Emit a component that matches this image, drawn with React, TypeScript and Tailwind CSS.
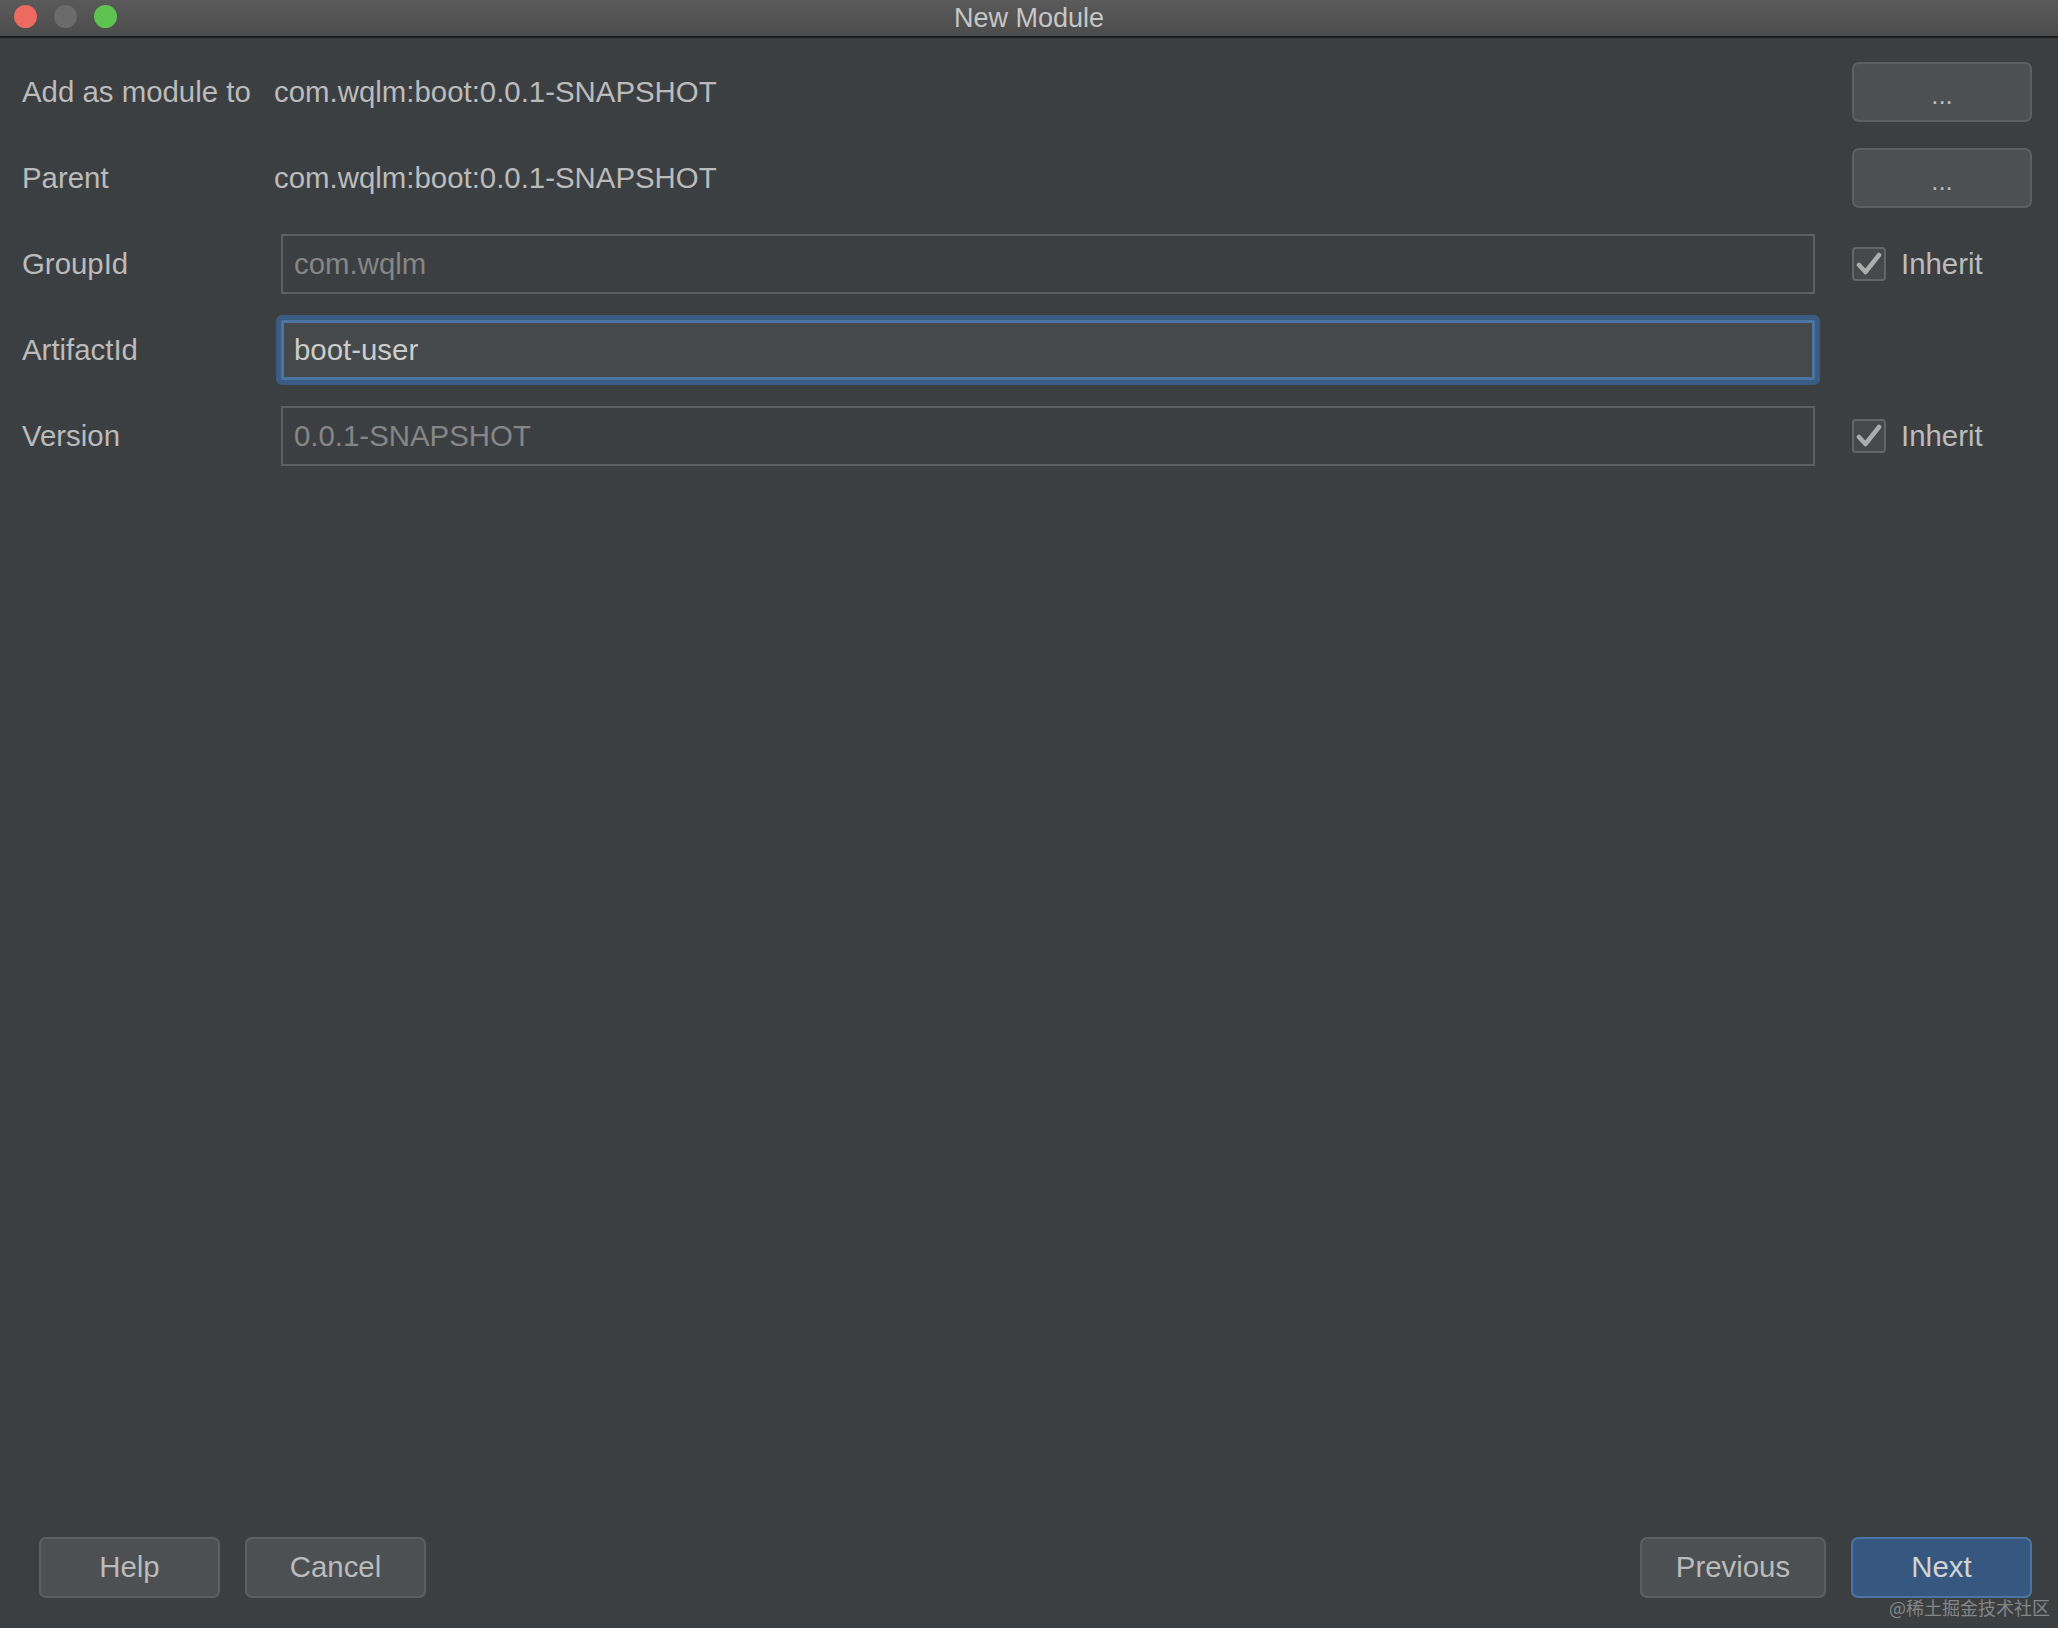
import React from 'react';

const font = { fontFamily: '"Liberation Sans", Arial, sans-serif' };

function TrafficLights() {
  return (
    <div className="absolute left-[14px] top-[5px] flex items-center gap-[17px]">
      <span className="w-[23px] h-[23px] rounded-full bg-[#ec6a5f]" />
      <span className="w-[23px] h-[23px] rounded-full bg-[#6b6b6b]" />
      <span className="w-[23px] h-[23px] rounded-full bg-[#5fc351]" />
    </div>
  );
}

function Checkbox() {
  return (
    <span className="w-[34px] h-[34px] rounded-[4px] border-2 border-[#636566] bg-[#45494a] flex items-center justify-center">
      <svg width="26" height="24" viewBox="0 0 26 24" fill="none">
        <path d="M3 13l6.5 7L23 3" stroke="#acacac" strokeWidth="4.5" strokeLinecap="round" strokeLinejoin="round" />
      </svg>
    </span>
  );
}

function DialogButton({ label, primary, wide }: { label: string; primary?: boolean; wide?: boolean }) {
  return (
    <button
      className={
        (wide ? 'w-[186px] ' : 'w-[181px] ') +
        (primary
          ? 'h-[61px] rounded-[7px] border-2 border-[#4a74a3] bg-[#365880] text-[#d3d3d3] text-[29.4px]'
          : 'h-[61px] rounded-[7px] border-2 border-[#5c6062] bg-[#4c5052] text-[#bbbbbb] text-[29.4px]')
      }
      style={font}
    >
      {label}
    </button>
  );
}

export default function App() {
  return (
    <div className="relative w-[2058px] h-[1628px] bg-[#3c3f41] flex flex-col overflow-hidden" style={font}>
      <header className="relative h-[38px] shrink-0 bg-gradient-to-b from-[#5a5a5a] to-[#4c4c4c] border-b-2 border-[#1c1c1c] flex items-center justify-center">
        <TrafficLights />
        <span className="text-[27px] text-[#c6c6c6] leading-none">New Module</span>
      </header>

      <main className="flex-1 pt-[24px] pl-[22px] pr-[26px] flex flex-col gap-[26px] text-[29.4px] text-[#bbbbbb]">
        <div className="h-[60px] flex items-center">
          <span className="w-[252px]">Add as module to</span>
          <span className="flex-1">com.wqlm:boot:0.0.1-SNAPSHOT</span>
          <button className="ml-[37px] w-[180px] h-[60px] rounded-[7px] border-2 border-[#5c6062] bg-[#4c5052] text-[#bbbbbb] text-[26px] leading-none pt-[6px]">...</button>
        </div>

        <div className="h-[60px] flex items-center">
          <span className="w-[252px]">Parent</span>
          <span className="flex-1">com.wqlm:boot:0.0.1-SNAPSHOT</span>
          <button className="ml-[37px] w-[180px] h-[60px] rounded-[7px] border-2 border-[#5c6062] bg-[#4c5052] text-[#bbbbbb] text-[26px] leading-none pt-[6px]">...</button>
        </div>

        <div className="h-[60px] flex items-center">
          <span className="w-[252px]">GroupId</span>
          <div className="flex-1 ml-[7px] h-[60px] border-2 border-[#5f6061] flex items-center pl-[11px] text-[#868686]">com.wqlm</div>
          <div className="ml-[37px] w-[180px] flex items-center gap-[15px]">
            <Checkbox />
            <span>Inherit</span>
          </div>
        </div>

        <div className="h-[60px] flex items-center">
          <span className="w-[252px]">ArtifactId</span>
          <div className="flex-1 ml-[7px] h-[60px] border-[3px] border-[#4b74a2] bg-[#45494a] shadow-[0_0_0_5px_#3b5c82] rounded-[2px] flex items-center pl-[10px] text-[#cccccc]">boot-user</div>
          <div className="ml-[37px] w-[180px]" />
        </div>

        <div className="h-[60px] flex items-center">
          <span className="w-[252px]">Version</span>
          <div className="flex-1 ml-[7px] h-[60px] border-2 border-[#5f6061] flex items-center pl-[11px] text-[#868686]">0.0.1-SNAPSHOT</div>
          <div className="ml-[37px] w-[180px] flex items-center gap-[15px]">
            <Checkbox />
            <span>Inherit</span>
          </div>
        </div>
      </main>

      <footer className="shrink-0 pl-[39px] pr-[26px] pb-[30px] flex items-center justify-between">
        <div className="flex gap-[25px]">
          <DialogButton label="Help" />
          <DialogButton label="Cancel" />
        </div>
        <div className="flex gap-[25px]">
          <DialogButton label="Previous" wide />
          <DialogButton label="Next" primary />
        </div>
      </footer>

      <span
        className="absolute right-[8px] bottom-[12px] text-[18px] leading-none text-[#9a9a9a]/80"
        style={{ fontFamily: '"Noto Sans CJK SC", "Liberation Sans", sans-serif' }}
      >
        @稀土掘金技术社区
      </span>
    </div>
  );
}
